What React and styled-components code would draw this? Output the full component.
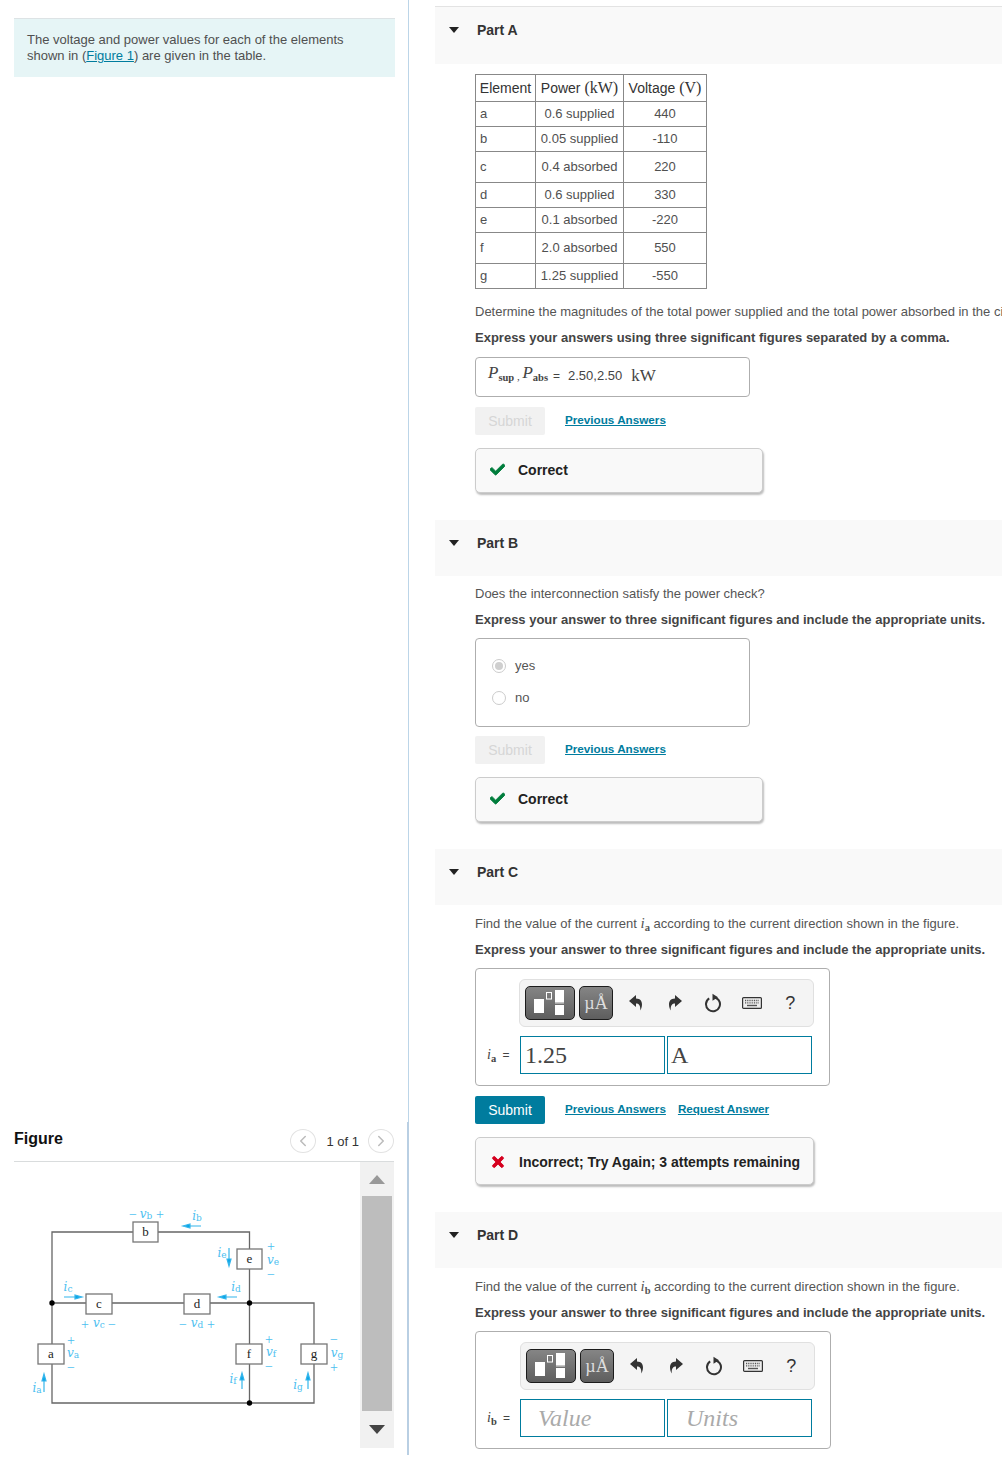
import React from 'react';
import styled, { createGlobalStyle } from 'styled-components';
import { FaCheck, FaTimes } from 'react-icons/fa';
import { ChevronLeft, ChevronRight } from 'lucide-react';

const Global = createGlobalStyle`
  html, body { margin: 0; padding: 0; background: #fff; overflow: hidden; }
  body { font-family: "Liberation Sans", Arial, sans-serif; color: #505050; }
`;

const Page = styled.div`
  display: flex; align-items: flex-start; width: 1002px; height: 1468px; overflow: hidden;
`;
const LeftPane = styled.aside`
  position: relative; box-sizing: border-box; flex: 0 0 409px; min-width: 0; height: 1455px; padding: 18px 0 7px 14px;
  display: flex; flex-direction: column; border-right: 1px solid #bcd5e8;
  &::after {
    content: ''; position: absolute; right: -1px; bottom: 0; width: 2px; height: 333px; background: #b9cfe3;
  }
`;
const Intro = styled.div`
  box-sizing: border-box; width: 381px; height: 59px; padding: 13px 13px 0;
  background: #e6f5f6; border-top: 1px solid #dde3e5; font-size: 13px; line-height: 16px; color: #505050;
`;
const Link = styled.a`
  color: #007c9e; text-decoration: underline; font-weight: ${p => (p.$bold ? 700 : 400)};
  font-size: ${p => (p.$bold ? '11.7px' : 'inherit')};
`;
const Figure = styled.section`
  margin-top: auto; width: 380px;
`;
const FigureHead = styled.header`
  display: flex; align-items: center; height: 43px; box-sizing: content-box; border-bottom: 1px solid #d9dcdd;
`;
const FigureTitle = styled.h2`
  margin: 0 auto 2px 0; font-size: 16px; font-weight: 700; color: #111;
`;
const Pager = styled.span`
  font-size: 13px; color: #333; margin: 4px 9px 0 10px;
`;
const PageBtn = styled.span`
  display: flex; align-items: center; justify-content: center; width: 26px; height: 24px;
  border: 1px solid #e2e2e2; border-radius: 50%; box-sizing: border-box; color: #bbb; margin-top: 2px;
`;
const FigureBody = styled.div`
  display: flex; height: 286px;
`;
const Diagram = styled.svg`
  flex: 0 0 346px; display: block;
`;
const Scroll = styled.div`
  flex: 0 0 34px; background: #f1f1f1; display: flex; flex-direction: column; align-items: center;
`;
const ScrollCap = styled.div`
  flex: 0 0 ${p => p.$h}px; display: flex; align-items: center; justify-content: center;
`;
const Tri = styled.span`
  width: 0; height: 0; border-left: 8px solid transparent; border-right: 8px solid transparent;
  ${p => (p.$up ? 'border-bottom: 9px solid #999;' : 'border-top: 9px solid #444;')}
`;
const Thumb = styled.div`
  width: 30px; flex: 0 0 215px; background: #bdbdbd;
`;

const RightPane = styled.main`
  flex: 1 1 auto; min-width: 0; padding: 6px 0 0 26px; overflow: hidden;
`;
const PartHead = styled.header`
  box-sizing: border-box; height: ${p => (p.$first ? 58 : 56)}px; margin-top: ${p => (p.$first ? 0 : 27)}px;
  background: #f9f9f9; ${p => p.$first && 'border-top: 1px solid #e3e3e3;'}
  display: flex; align-items: flex-start; padding-top: 16px;
  font-size: 14px; font-weight: 700; color: #333; line-height: 14px;
`;
const Caret = styled.span`
  width: 0; height: 0; margin: 4px 18px 0 14px; border-left: 5.5px solid transparent;
  border-right: 5.5px solid transparent; border-top: 6px solid #222;
`;
const PartBody = styled.div`
  padding-left: 40px;
`;
const DataTable = styled.table`
  border-collapse: collapse; margin-top: 10px; table-layout: fixed; width: 231px;
  font-size: 13px; color: #505050;
`;
const Th = styled.th`
  border: 1px solid #888; font-weight: 400; font-size: 14px; color: #333; padding: 0 0 1px; text-align: center;
  white-space: nowrap;
`;
const Tr = styled.tr`
  height: ${p => p.$h}px;
`;
const Td = styled.td`
  border: 1px solid #888; padding: ${p => (p.$left ? '0 0 2px 4px' : '0 0 2px')}; text-align: ${p => (p.$left ? 'left' : 'center')};
  white-space: nowrap;
`;
const Serif = styled.span`
  font-family: "Liberation Serif", "Times New Roman", serif; font-size: ${p => p.$s || 16}px; line-height: 0;
  font-style: ${p => (p.$i ? 'italic' : 'normal')}; font-weight: ${p => (p.$b ? 700 : 400)};
`;
const Sub = styled.sub`
  font-size: 10.5px; font-style: normal; line-height: 0; vertical-align: -3px; font-weight: 700;
`;
const Prompt = styled.p`
  margin: ${p => p.$mt}px 0 0; height: 18px; line-height: 18px; font-size: 13px; color: #555;
  white-space: nowrap;
`;
const Instruction = styled.p`
  margin: 8px 0 0; height: 18px; line-height: 18px; font-size: 13px; font-weight: 700; color: #444; white-space: nowrap;
`;
const AnswerBox = styled.div`
  box-sizing: border-box; width: ${p => p.$w}px; height: ${p => p.$h}px; margin-top: ${p => p.$mt || 9}px;
  border: 1px solid #aeaeae; border-radius: 4px; background: #fff;
`;
const FilledAnswer = styled(AnswerBox)`
  display: flex; align-items: center; padding: 0 12px 3px; font-size: 14px; color: #444; white-space: nowrap;
`;
const Eq = styled.span`
  margin: 0 8px 0 5px; font-size: 12px;
`;
const Value = styled.span`
  font-size: 13px; margin-right: 9px;
`;
const RadioBox = styled(AnswerBox)`
  display: flex; flex-direction: column; gap: 14px; padding: 18px 16px;
`;
const RadioRow = styled.label`
  box-sizing: border-box; display: flex; align-items: center; gap: 9px; height: 18px; padding-bottom: 2px;
  font-size: 13px; color: #555;
`;
const Radio = styled.span`
  width: 14px; height: 14px; margin-top: 2px; border-radius: 50%; box-sizing: border-box; border: 1px solid #ccc; background: #fff;
  display: flex; align-items: center; justify-content: center;
  &::after { content: ''; width: 8px; height: 8px; border-radius: 50%; background: ${p => (p.$on ? '#cfcfcf' : 'transparent')}; }
`;
const Actions = styled.div`
  display: flex; align-items: center; margin-top: ${p => p.$mt}px;
`;
const SubmitBtn = styled.button`
  width: 70px; height: 28px; border: 0; border-radius: 2px; padding: 0; margin-right: 20px;
  font: 400 14px "Liberation Sans", Arial, sans-serif;
  background: ${p => (p.$on ? '#007c9e' : '#f1f1f1')}; color: ${p => (p.$on ? '#fff' : '#d6d6d6')};
`;
const ActionLink = styled(Link)`
  margin: 0 12px 3px 0;
`;
const Feedback = styled.div`
  box-sizing: border-box; width: ${p => p.$w}px; height: ${p => p.$h}px; margin-top: 13px;
  display: flex; align-items: center; gap: ${p => p.$gap}px; padding: ${p => p.$pt}px 0 ${p => p.$pb}px 14px;
  background: #f9f9f9; border: 1px solid #ccc; border-radius: 5px; box-shadow: 1px 2px 2px #bdbdbd;
  font-size: 14px; font-weight: 700; color: #222; white-space: nowrap;
`;
const ToolBox = styled(AnswerBox)`
  padding: 10px 0 0 11px;
`;
const Toolbar = styled.div`
  box-sizing: border-box; width: 295px; height: 48px; margin-left: ${p => p.$ml}px; padding: 6px 0 0 5px;
  display: flex; align-items: flex-start; background: #f4f4f4; border: 1px solid #e0e0e0; border-radius: 6px;
`;
const DarkBtn = styled.span`
  box-sizing: border-box; height: 34px; width: ${p => p.$w}px; margin-right: 4px; flex: none;
  background: linear-gradient(#858585, #5e5e5e); border: 1px solid #1c1c1c; border-radius: 5px;
  display: flex; align-items: center; justify-content: center; color: #ddd;
  font-family: "Liberation Serif", serif; font-size: 18px;
`;
const IconSlot = styled.span`
  flex: 0 0 38.5px; height: 34px; display: flex; align-items: center; justify-content: center; color: #333;
  font-size: 18px;
`;
const InputRow = styled.div`
  display: flex; align-items: center; margin-top: 9px;
`;
const InputLabel = styled.span`
  flex: 0 0 33px; font-size: 12px; color: #444; white-space: nowrap; word-spacing: 3px;
`;
const UnitInput = styled.div`
  box-sizing: border-box; width: 145px; height: 38px; margin-right: 2px; border: 1px solid #007c9e; background: #fff;
  font-family: "Liberation Serif", serif; font-size: 24px; line-height: 37px; white-space: nowrap;
  padding-left: ${p => p.$pl}px; color: ${p => (p.$ph ? '#aaa' : '#444')}; font-style: ${p => (p.$ph ? 'italic' : 'normal')};
`;
const TurnArrow = styled.svg`
  transform: ${p => (p.$flip ? 'scaleX(-1)' : 'none')};
`;

const Turn = ({ flip }) => (
  <TurnArrow $flip={flip} width="14" height="16" viewBox="0 0 14 16">
    <path d="M7 0L0 6L7 12V8.5C10 8.5 11.5 10.5 11.3 15.5C13.5 12 14.8 3.5 7 3.5Z" fill="#333" />
  </TurnArrow>
);
const Refresh = () => (
  <svg width="18" height="20" viewBox="0 0 18 20" fill="none" stroke="#333" strokeWidth="2">
    <path d="M9 4.2A7 7 0 1 1 5.2 5.3" />
    <path d="M8.5 .7V7.7L14 4.2Z" fill="#333" stroke="none" />
  </svg>
);
const Keyboard = () => (
  <svg width="20" height="12" viewBox="0 0 20 12">
    <rect x=".6" y=".6" width="18.8" height="10.8" rx="1" fill="#eee" stroke="#333" strokeWidth="1.2" />
    <path d="M3 3.5h14M3 5.8h14" stroke="#555" strokeWidth="1.3" strokeDasharray="1 .8" />
    <path d="M5 8.5h10" stroke="#555" strokeWidth="1.4" />
  </svg>
);
const TemplateIcon = () => (
  <svg width="32" height="26" viewBox="0 0 32 26">
    <rect x="0" y="9" width="10" height="14" fill="#fff" />
    <rect x="12.5" y="2.5" width="5" height="6.5" fill="none" stroke="#fff" />
    <rect x="21" y="0" width="9" height="12" fill="#fff" />
    <rect x="21" y="12.4" width="9" height="1" fill="#fff" />
    <rect x="21" y="15" width="9" height="10" fill="#fff" />
  </svg>
);

const MathTools = ({ ml }) => (
  <Toolbar $ml={ml}>
    <DarkBtn $w={50}><TemplateIcon /></DarkBtn>
    <DarkBtn $w={34}>µÅ</DarkBtn>
    <IconSlot><Turn /></IconSlot>
    <IconSlot><Turn flip /></IconSlot>
    <IconSlot><Refresh /></IconSlot>
    <IconSlot><Keyboard /></IconSlot>
    <IconSlot>?</IconSlot>
  </Toolbar>
);

const rows = [
  ['a', '0.6 supplied', '440', 25], ['b', '0.05 supplied', '-110', 25], ['c', '0.4 absorbed', '220', 31],
  ['d', '0.6 supplied', '330', 25], ['e', '0.1 absorbed', '-220', 25], ['f', '2.0 absorbed', '550', 31],
  ['g', '1.25 supplied', '-550', 25],
];

const Wire = styled.path`
  fill: none; stroke: #666; stroke-width: 1.3;
`;
const Element = styled.rect`
  fill: #fff; stroke: #777; stroke-width: 1.3;
`;
const ElementName = styled.text`
  font-family: "Liberation Serif", serif; font-size: 13px; fill: #222; text-anchor: middle; dominant-baseline: central;
`;
const Blue = styled.text`
  font-family: ${p => (p.$i ? '"DejaVu Serif"' : '"Liberation Serif"')}, serif; font-size: ${p => p.$s || 12}px; fill: #4cc0f0; text-anchor: middle;
  dominant-baseline: central; font-style: ${p => (p.$i ? 'italic' : 'normal')};
`;
const ArrowShaft = styled.path`
  stroke: #35b6ec; stroke-width: 1.2; fill: #0aa5e6;
`;

const boxes = [
  ['b', 133, 1222, 25, 20], ['e', 237, 1249, 25, 20], ['c', 86, 1294, 26, 20], ['d', 184, 1294, 26, 20],
  ['a', 38, 1344, 26, 20], ['f', 236, 1344, 26, 20], ['g', 301, 1344, 26, 20],
];
const Sym = ({ name, sub, x, y }) => (
  <Blue x={x} y={y} $i>{name}<tspan fontSize="9" fontStyle="normal" dy="2">{sub}</tspan></Blue>
);
const signs = [
  ['−', 133, 1214], ['+', 160, 1214], ['+', 271, 1246], ['−', 271, 1274], ['+', 85, 1324], ['−', 112, 1324],
  ['−', 183, 1324], ['+', 211, 1324], ['+', 71, 1340], ['−', 71, 1367], ['+', 269, 1339], ['−', 269, 1366],
  ['−', 334, 1339], ['+', 334, 1367],
];
const syms = [
  ['v', 'b', 146, 1214], ['i', 'b', 197, 1216], ['i', 'e', 222, 1253], ['v', 'e', 273, 1260], ['i', 'c', 68, 1287],
  ['i', 'd', 236, 1287], ['v', 'c', 99, 1323], ['v', 'd', 197, 1323], ['v', 'a', 73, 1353], ['i', 'a', 37, 1388],
  ['v', 'f', 271, 1352], ['i', 'f', 233, 1379], ['v', 'g', 337, 1353], ['i', 'g', 298, 1385],
];
const hArrows = [[201, 183, 1226], [64, 82, 1297], [237, 219, 1297]];
const vArrows = [[229, 1248, 1266], [44, 1392, 1374], [242, 1389, 1373], [308, 1389, 1373]];

const Circuit = () => (
  <Diagram width="346" height="286" viewBox="14 1162 346 286">
    <Wire d="M52 1344V1232H133M158 1232H249.5V1249M249.5 1269V1344M52 1364V1403H314V1364M314 1344V1303H210M184 1303H112M86 1303H52M249.5 1364V1403" />
    {boxes.map(([n, x, y, w, h]) => (
      <g key={n}>
        <Element x={x} y={y} width={w} height={h} />
        <ElementName x={x + w / 2} y={y + h / 2 - 1}>{n}</ElementName>
      </g>
    ))}
    <circle cx="52" cy="1303" r="2.7" fill="#000" />
    <circle cx="249.5" cy="1303" r="2.7" fill="#000" />
    <circle cx="249.5" cy="1403" r="2.7" fill="#000" />
    {signs.map(([s, x, y], k) => <Blue key={k} x={x} y={y} $s={14}>{s}</Blue>)}
    {syms.map(([n, s, x, y]) => <Sym key={n + s} name={n} sub={s} x={x} y={y} />)}
    {hArrows.map(([a, b, y], k) => {
      const d = b > a ? 1 : -1;
      return <ArrowShaft key={k} d={`M${a} ${y}H${b - d * 7}V${y - 2}L${b} ${y}L${b - d * 7} ${y + 2}V${y}`} />;
    })}
    {vArrows.map(([x, a, b], k) => {
      const d = b > a ? 1 : -1;
      return <ArrowShaft key={k} d={`M${x} ${a}V${b - d * 7}H${x - 2}L${x} ${b}L${x + 2} ${b - d * 7}H${x}`} />;
    })}
  </Diagram>
);

const Correct = () => (
  <Feedback $w={288} $h={45} $gap={13} $pt={0} $pb={2}>
    <FaCheck size={15} color="#007d3c" stroke="#007d3c" strokeWidth={30} />Correct
  </Feedback>
);

export default function App() {
  return (
    <Page>
      <Global />
      <LeftPane>
        <Intro>The voltage and power values for each of the elements shown in (<Link href="#">Figure 1</Link>) are given in the table.</Intro>
        <Figure>
          <FigureHead>
            <FigureTitle>Figure</FigureTitle>
            <PageBtn><ChevronLeft size={18} /></PageBtn>
            <Pager>1 of 1</Pager>
            <PageBtn><ChevronRight size={18} /></PageBtn>
          </FigureHead>
          <FigureBody>
            <Circuit />
            <Scroll>
              <ScrollCap $h={34}><Tri $up /></ScrollCap>
              <Thumb />
              <ScrollCap $h={37}><Tri /></ScrollCap>
            </Scroll>
          </FigureBody>
        </Figure>
      </LeftPane>

      <RightPane>
        <PartHead $first><Caret />Part A</PartHead>
        <PartBody>
          <DataTable>
            <colgroup><col width="60" /><col width="88" /><col width="83" /></colgroup>
            <thead>
              <Tr $h={27}>
                <Th>Element</Th>
                <Th>Power <Serif $s={16}>(kW)</Serif></Th>
                <Th>Voltage <Serif $s={16}>(V)</Serif></Th>
              </Tr>
            </thead>
            <tbody>
              {rows.map(([a, b, c, h]) => (
                <Tr key={a} $h={h}><Td $left>{a}</Td><Td>{b}</Td><Td>{c}</Td></Tr>
              ))}
            </tbody>
          </DataTable>
          <Prompt $mt={14}>Determine the magnitudes of the total power supplied and the total power absorbed in the circuit.</Prompt>
          <Instruction>Express your answers using three significant figures separated by a comma.</Instruction>
          <FilledAnswer $w={275} $h={40} $mt={10}>
            <Serif $i $s={17}>P<Sub>sup</Sub></Serif>
            <Serif $s={11}>&nbsp;,&nbsp;</Serif>
            <Serif $i $s={17}>P<Sub>abs</Sub></Serif>
            <Eq>=</Eq>
            <Value>2.50,2.50</Value>
            <Serif $s={17}>kW</Serif>
          </FilledAnswer>
          <Actions $mt={10}>
            <SubmitBtn>Submit</SubmitBtn>
            <ActionLink href="#" $bold>Previous Answers</ActionLink>
          </Actions>
          <Correct />
        </PartBody>

        <PartHead><Caret />Part B</PartHead>
        <PartBody>
          <Prompt $mt={9}>Does the interconnection satisfy the power check?</Prompt>
          <Instruction>Express your answer to three significant figures and include the appropriate units.</Instruction>
          <RadioBox $w={275} $h={89}>
            <RadioRow><Radio $on />yes</RadioRow>
            <RadioRow><Radio />no</RadioRow>
          </RadioBox>
          <Actions $mt={9}>
            <SubmitBtn>Submit</SubmitBtn>
            <ActionLink href="#" $bold>Previous Answers</ActionLink>
          </Actions>
          <Correct />
        </PartBody>

        <PartHead><Caret />Part C</PartHead>
        <PartBody>
          <Prompt $mt={10}>Find the value of the current <Serif $i $s={15}>i<Sub>a</Sub></Serif> according to the current direction shown in the figure.</Prompt>
          <Instruction>Express your answer to three significant figures and include the appropriate units.</Instruction>
          <ToolBox $w={355} $h={118}>
            <MathTools ml={32} />
            <InputRow>
              <InputLabel><Serif $i $s={14}>i<Sub>a</Sub></Serif> =</InputLabel>
              <UnitInput $pl={4}>1.25</UnitInput>
              <UnitInput $pl={3}>A</UnitInput>
            </InputRow>
          </ToolBox>
          <Actions $mt={10}>
            <SubmitBtn $on>Submit</SubmitBtn>
            <ActionLink href="#" $bold>Previous Answers</ActionLink>
            <ActionLink href="#" $bold>Request Answer</ActionLink>
          </Actions>
          <Feedback $w={339} $h={48} $gap={13} $pt={2} $pb={0}>
            <FaTimes size={16} color="#d5001f" stroke="#d5001f" strokeWidth={30} />Incorrect; Try Again; 3 attempts remaining
          </Feedback>
        </PartBody>

        <PartHead><Caret />Part D</PartHead>
        <PartBody>
          <Prompt $mt={10}>Find the value of the current <Serif $i $s={15}>i<Sub>b</Sub></Serif> according to the current direction shown in the figure.</Prompt>
          <Instruction>Express your answer to three significant figures and include the appropriate units.</Instruction>
          <ToolBox $w={356} $h={118}>
            <MathTools ml={33} />
            <InputRow>
              <InputLabel><Serif $i $s={14}>i<Sub>b</Sub></Serif> =</InputLabel>
              <UnitInput $ph $pl={17}>Value</UnitInput>
              <UnitInput $ph $pl={18}>Units</UnitInput>
            </InputRow>
          </ToolBox>
        </PartBody>
      </RightPane>
    </Page>
  );
}
